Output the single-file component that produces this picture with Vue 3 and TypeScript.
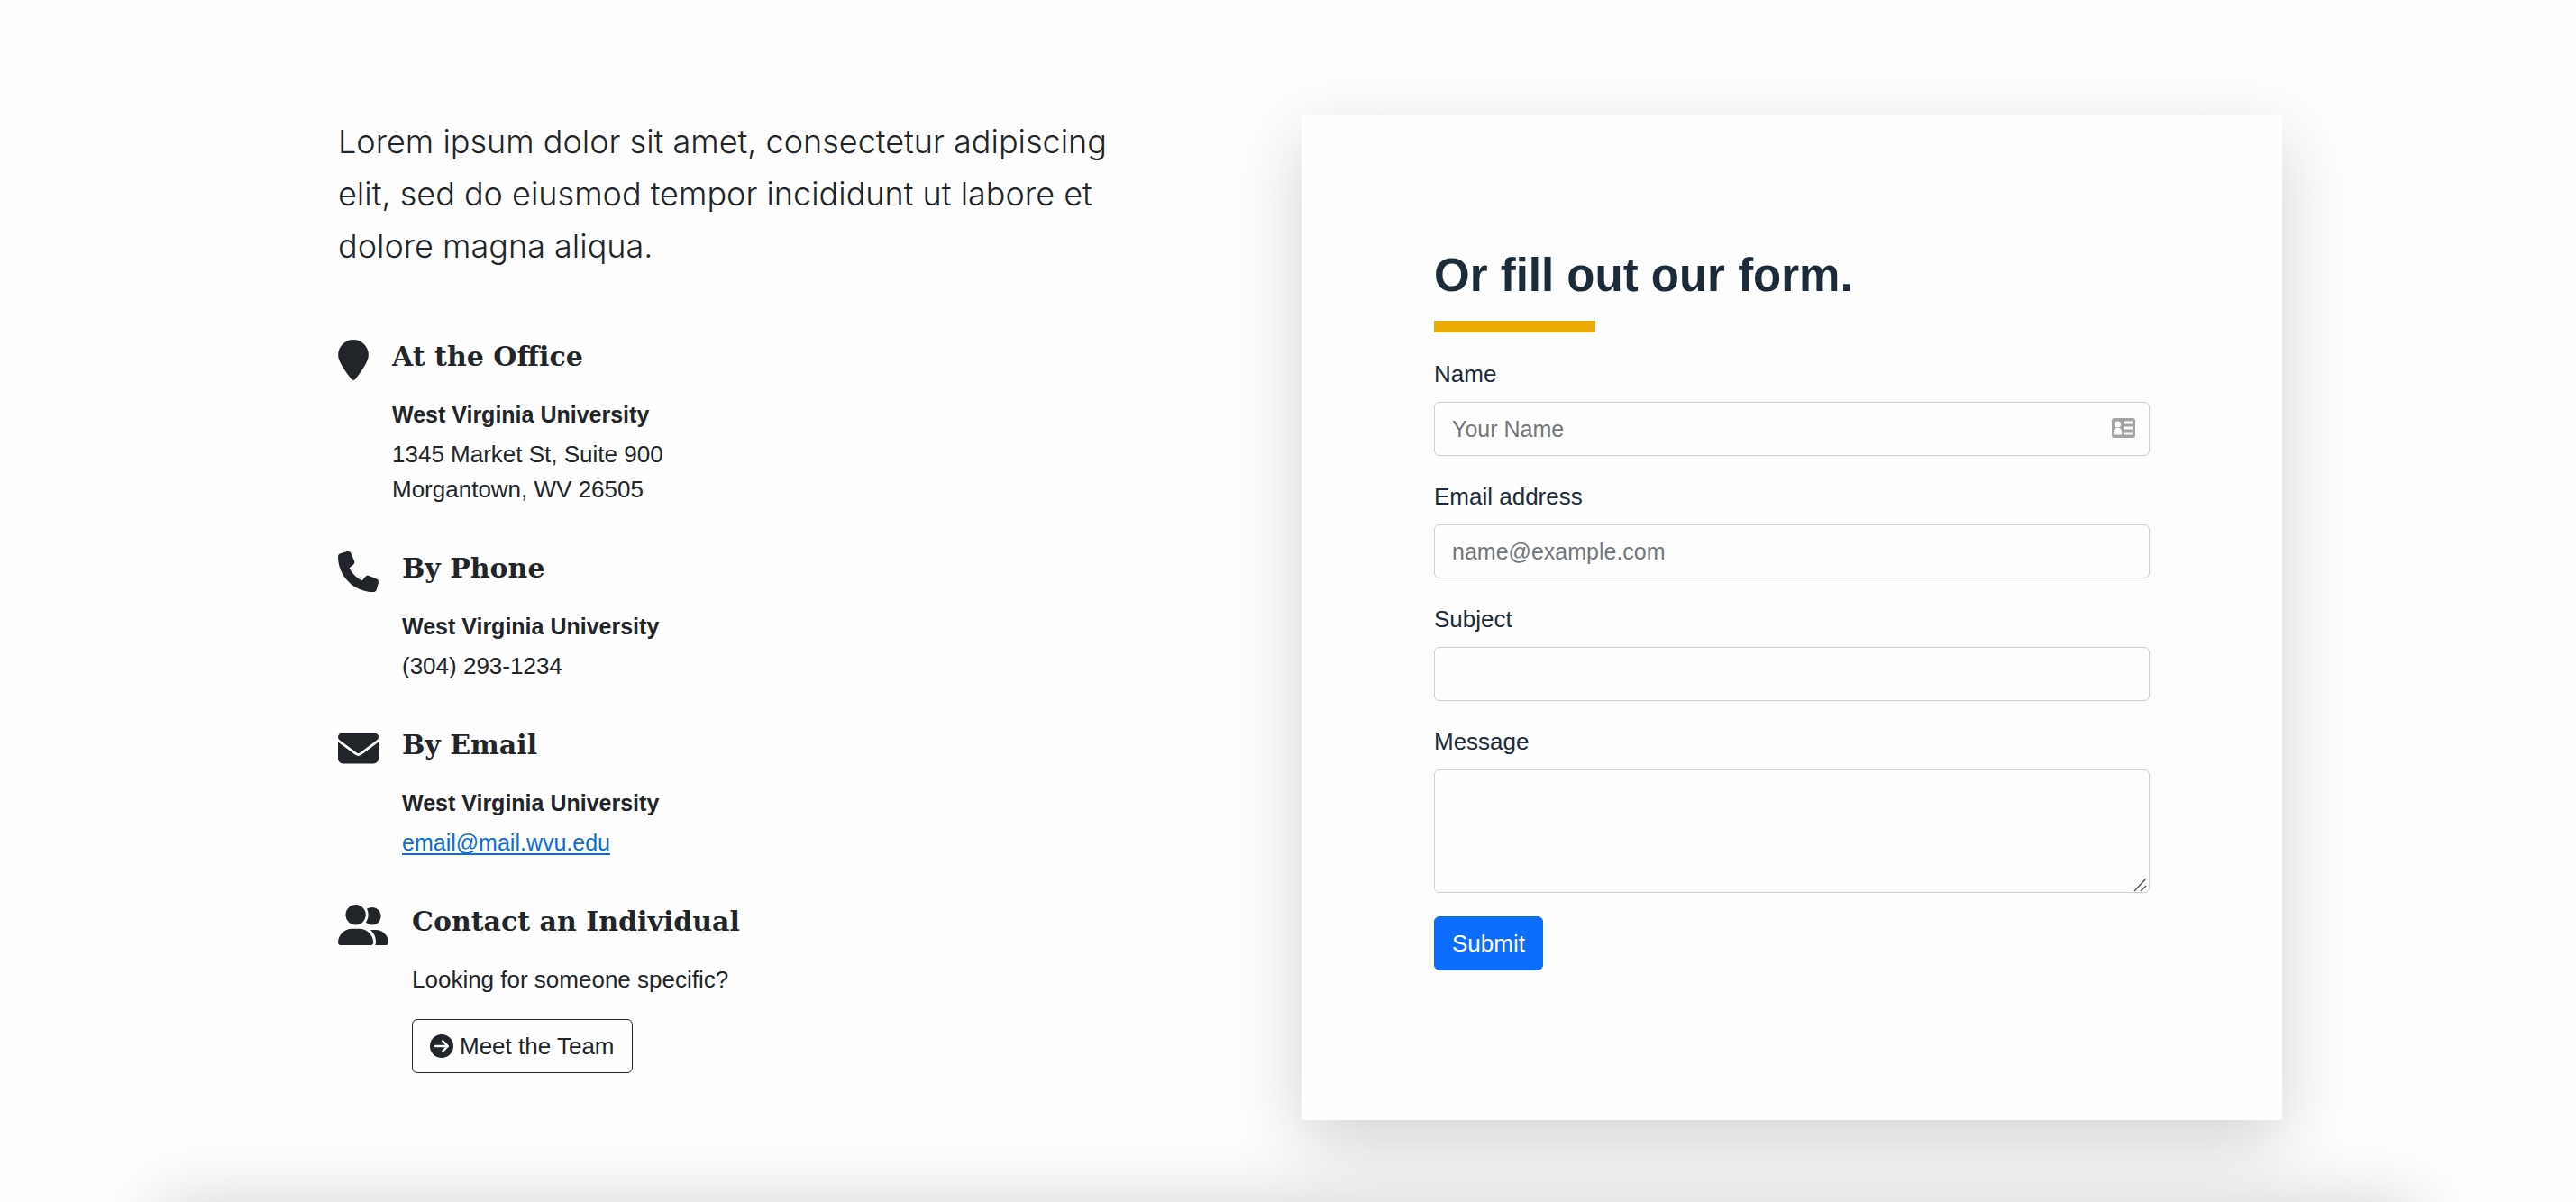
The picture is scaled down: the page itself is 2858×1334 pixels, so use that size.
<script setup lang="ts">
import { ref } from 'vue'

interface Contact {
  id: string
  title: string
  viewBox: string
  width: number
  path: string
}

const contacts: Contact[] = [
  {
    id: 'office',
    title: 'At the Office',
    viewBox: '0 0 384 512',
    width: 34,
    path: 'M384 192c0 87.400-117 243-168.300 307.200c-12.300 15.300-35.100 15.300-47.400 0C117 435 0 279.400 0 192C0 86 86 0 192 0S384 86 384 192z',
  },
  {
    id: 'phone',
    title: 'By Phone',
    viewBox: '0 0 512 512',
    width: 45,
    path: 'M164.900 24.600c-7.700-18.600-28-28.500-47.400-23.200l-88 24C12.100 30.200 0 46 0 64C0 311.400 200.600 512 448 512c18 0 33.800-12.100 38.600-29.500l24-88c5.300-19.400-4.600-39.700-23.200-47.400l-96-40c-16.300-6.800-35.200-2.100-46.300 11.600L304.700 368C234.300 334.700 177.300 277.700 144 207.300L193.300 167c13.700-11.200 18.400-30 11.600-46.300l-40-96z',
  },
  {
    id: 'email',
    title: 'By Email',
    viewBox: '0 0 512 512',
    width: 45,
    path: 'M48 64C21.500 64 0 85.500 0 112c0 15.100 7.100 29.300 19.200 38.400L236.800 313.600c11.400 8.500 27 8.500 38.400 0L492.800 150.400c12.100-9.100 19.200-23.300 19.200-38.400c0-26.500-21.500-48-48-48H48zM0 176V384c0 35.300 28.700 64 64 64H448c35.300 0 64-28.700 64-64V176L294.400 339.200c-22.800 17.100-54 17.100-76.800 0L0 176z',
  },
  {
    id: 'individual',
    title: 'Contact an Individual',
    viewBox: '0 0 640 512',
    width: 56,
    path: 'M96 128a128 128 0 1 1 256 0A128 128 0 1 1 96 128zM0 482.300C0 383.800 79.800 304 178.300 304h91.400C368.200 304 448 383.800 448 482.300c0 16.400-13.300 29.700-29.700 29.700H29.700C13.300 512 0 498.700 0 482.300zM609.300 512H471.400c5.400-9.400 8.600-20.300 8.600-32v-8c0-60.700-27.100-115.200-69.800-151.800c2.400-.1 4.700-.2 7.100-.2h61.400C567.800 320 640 392.200 640 481.300c0 17-13.800 30.700-30.700 30.700zM432 256c-31 0-59-12.600-79.300-32.900C372.400 196.500 384 163.600 384 128c0-26.800-6.600-52.100-18.300-74.300C384.300 40.100 407.200 32 432 32c61.900 0 112 50.100 112 112s-50.100 112-112 112z',
  },
]

const name = ref('')
const email = ref('')
const subject = ref('')
const message = ref('')
</script>

<template>
  <main class="page">
    <section class="contact">
      <div class="info">
        <p class="lead">
          Lorem ipsum dolor sit amet, consectetur adipiscing elit, sed do eiusmod tempor incididunt ut labore et dolore
          magna aliqua.
        </p>

        <div v-for="item in contacts" :key="item.id" class="item">
          <svg class="item-icon" :width="item.width" height="45" :viewBox="item.viewBox" aria-hidden="true">
            <path :d="item.path" fill="currentColor" />
          </svg>
          <div class="item-body">
            <h3>{{ item.title }}</h3>
            <template v-if="item.id === 'individual'">
              <p>Looking for someone specific?</p>
              <button type="button" class="btn btn-outline">
                <svg width="26" height="26" viewBox="0 0 512 512" aria-hidden="true">
                  <path
                    fill="currentColor"
                    d="M0 256a256 256 0 1 0 512 0A256 256 0 1 0 0 256zM297 385c-9.400 9.400-24.600 9.400-33.900 0s-9.400-24.600 0-33.900l71-71L120 280c-13.300 0-24-10.700-24-24s10.700-24 24-24l214.100 0-71-71c-9.400-9.400-9.400-24.600 0-33.900s24.600-9.400 33.900 0L409 239c9.400 9.400 9.400 24.600 0 33.900L297 385z"
                  />
                </svg>
                <span>Meet the Team</span>
              </button>
            </template>
            <template v-else>
              <strong>West Virginia University</strong>
              <address v-if="item.id === 'office'">1345 Market St, Suite 900<br />Morgantown, WV 26505</address>
              <p v-else-if="item.id === 'phone'">(304) 293-1234</p>
              <p v-else><a href="mailto:email@mail.wvu.edu">email@mail.wvu.edu</a></p>
            </template>
          </div>
        </div>
      </div>

      <form class="card" @submit.prevent>
        <h2>Or fill out our form.</h2>
        <div class="rule"></div>
        <div class="field">
          <label for="name">Name</label>
          <div class="control">
            <input id="name" v-model="name" type="text" placeholder="Your Name" />
            <svg class="autofill" width="26" height="22" viewBox="0 0 26 22" aria-hidden="true">
              <rect width="26" height="22" rx="3" fill="#a3a3a3" />
              <g fill="#fefefe">
                <circle cx="6.500" cy="7" r="3.500" />
                <path d="M2 18.500v-3c0-2.500 1.500-4.500 3-4.500h3c1.500 0 3 2 3 4.500v3z" />
                <rect x="13" y="3.500" width="10" height="3" />
                <rect x="13" y="9.500" width="10" height="3" />
                <rect x="13" y="15.500" width="10" height="3" />
              </g>
            </svg>
          </div>
        </div>
        <div class="field">
          <label for="email">Email address</label>
          <input id="email" v-model="email" type="email" placeholder="name@example.com" />
        </div>
        <div class="field">
          <label for="subject">Subject</label>
          <input id="subject" v-model="subject" type="text" />
        </div>
        <div class="field">
          <label for="message">Message</label>
          <div class="control">
            <textarea id="message" v-model="message"></textarea>
            <svg class="grip" width="16" height="16" viewBox="0 0 16 16" aria-hidden="true">
              <path d="M1 15L14 1M8 15L14 9" fill="none" stroke="#55585a" stroke-width="1.500" />
            </svg>
          </div>
        </div>
        <button type="submit" class="btn btn-primary">Submit</button>
      </form>
    </section>
    <div class="next-panel"></div>
  </main>
</template>

<style>
body {
  margin: 0;
  background: #fefefe;
}
</style>

<style scoped>
.page {
  overflow: hidden;
  background: #fefefe;
  color: #212529;
  font: 400 26px/39px 'Liberation Sans', Arial, sans-serif;
}

.page * {
  box-sizing: border-box;
}

.contact {
  display: grid;
  grid-template-columns: 1fr 1fr;
  gap: 30px;
  align-items: start;
  max-width: 2206px;
  margin: 0 auto;
  padding: 128px 0 92px;
}

.info {
  padding: 0 147px 0 49px;
}

.lead {
  margin: 0 0 67px;
  font: 300 36px/58px Inter, 'Liberation Sans', sans-serif;
}

.item {
  display: flex;
  align-items: flex-start;
  gap: 26px;
  margin-bottom: 41px;
}

.item:last-child {
  margin-bottom: 0;
}

.item-icon {
  flex: none;
  margin-top: 8px;
}

h3 {
  margin: 0 0 19px;
  font: 700 30px/53px 'DejaVu Serif', serif;
}

.item p,
address {
  margin: 0;
  font-style: normal;
}

strong {
  display: block;
  margin-bottom: 5px;
  font-size: 25px;
}

a {
  color: #0c6dd6;
  font-size: 25px;
  text-underline-offset: 3px;
  text-decoration-thickness: 2px;
  text-decoration-skip-ink: none;
}

.btn {
  display: inline-flex;
  align-items: center;
  height: 60px;
  padding: 0 19px;
  border: 1px solid;
  border-radius: 6px;
  font: inherit;
  cursor: pointer;
}

.btn-outline {
  gap: 7px;
  margin-top: 24px;
  border-color: #212529;
  background: transparent;
  color: #212529;
}

.btn-primary {
  border-color: #0d6efd;
  background: #0d6efd;
  color: #fff;
}

.card {
  padding: 147px 147px 166px;
  background: #fefefe;
  color: #1c2b39;
  box-shadow: 0 26px 78px rgba(0, 0, 0, 0.175);
}

h2 {
  margin: 0 0 19px;
  font: 700 51px/62px 'Liberation Sans', Arial, sans-serif;
}

.rule {
  width: 179px;
  height: 13px;
  margin-bottom: 27px;
  background: #eaaa00;
}

.field {
  margin-bottom: 26px;
}

label {
  display: block;
  margin-bottom: 11px;
}

.control {
  position: relative;
}

.autofill {
  position: absolute;
  top: 18px;
  right: 16px;
}

.grip {
  position: absolute;
  right: 2px;
  bottom: 1px;
  pointer-events: none;
}

input,
textarea {
  display: block;
  width: 100%;
  height: 60px;
  padding: 0 19px;
  border: 1px solid #cdd0d3;
  border-radius: 6px;
  background: #fefefe;
  color: #212529;
  font: inherit;
  font-size: 25px;
}

textarea {
  height: 137px;
  padding: 9px 19px;
  resize: vertical;
}

textarea::-webkit-resizer {
  background: transparent;
}

::placeholder {
  color: #72777b;
  opacity: 1;
}

/* Top edge of the following panel; only its shadow reaches into this section. */
.next-panel {
  height: 156px;
  margin: 0 176px -156px;
  box-shadow: 0 0 78px rgba(0, 0, 0, 0.175);
}
</style>
